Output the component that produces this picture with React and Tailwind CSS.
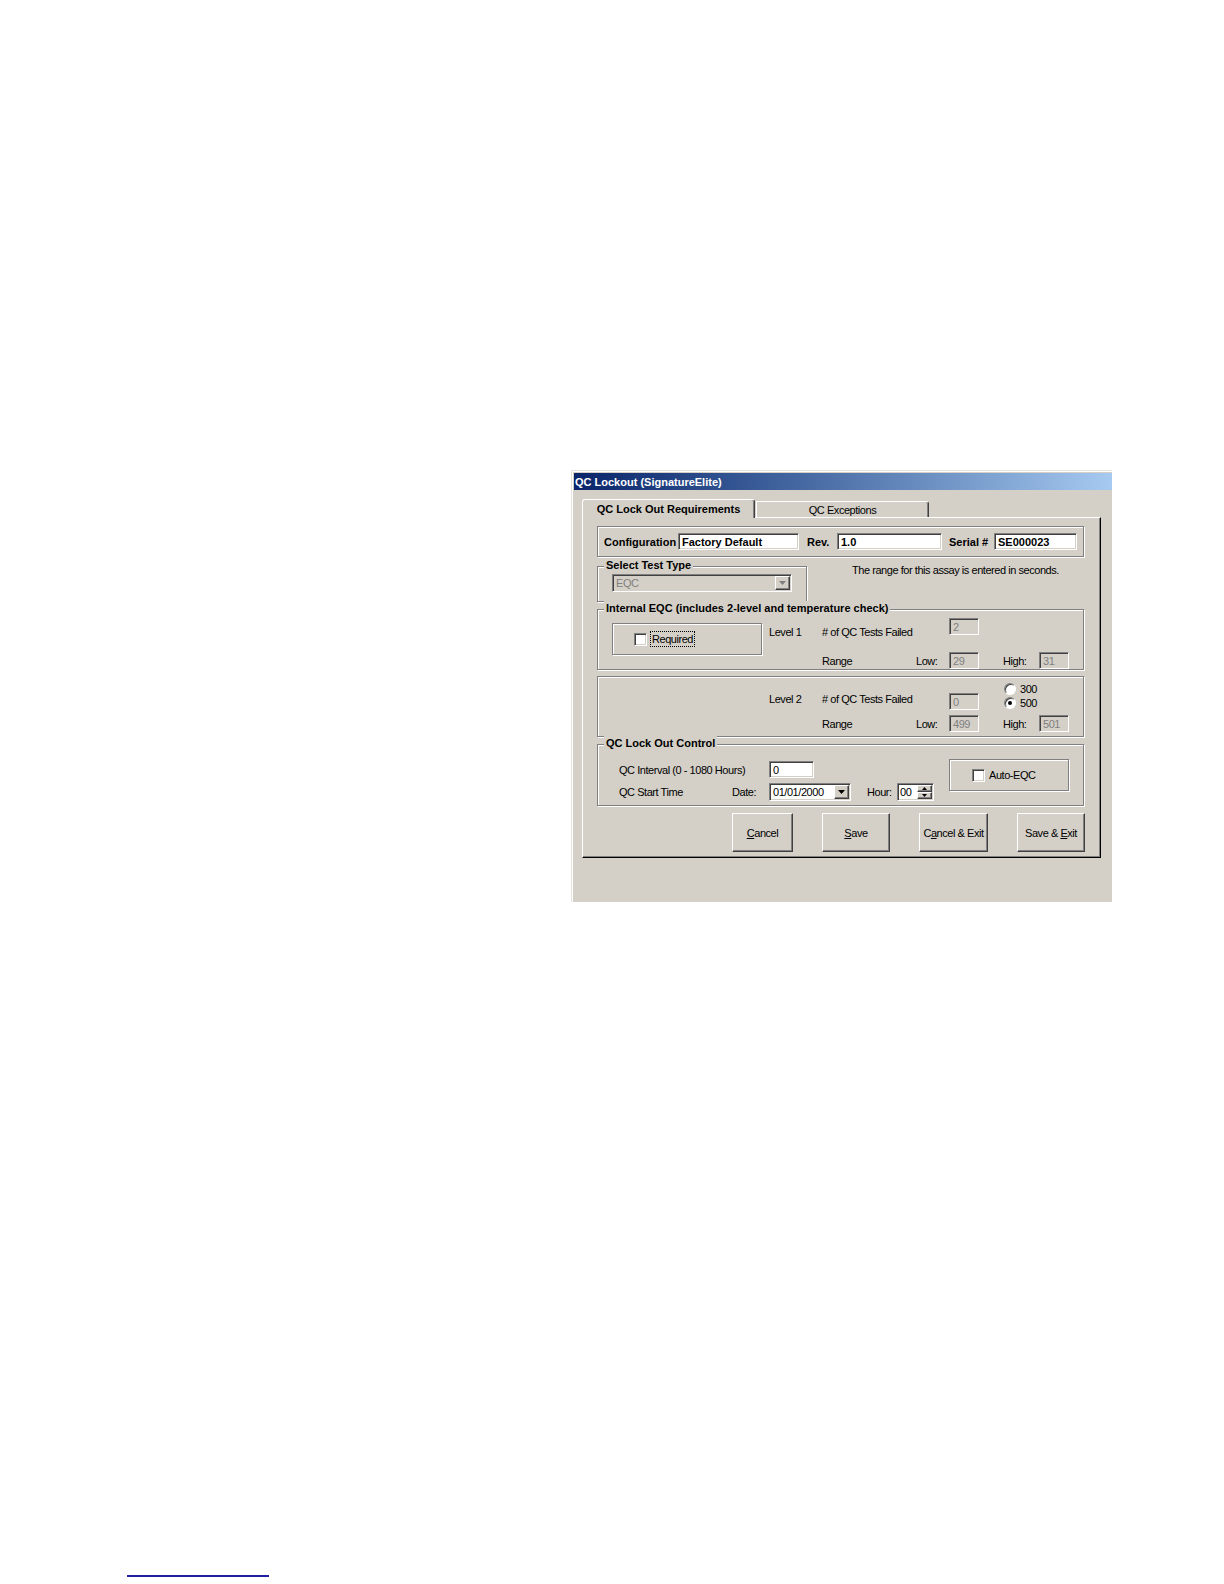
import React from "react";

const narrow =
  "font-['Liberation_Sans',Arial,sans-serif] text-[11px] leading-[14px] tracking-[-0.45px] whitespace-nowrap";
const bold =
  "font-['Liberation_Sans',Arial,sans-serif] text-[11px] leading-[14px] font-bold whitespace-nowrap";

const sunken =
  "border border-t-[#808080] border-l-[#808080] border-r-white border-b-white shadow-[inset_1px_1px_0_#404040,inset_-1px_-1px_0_#d4d0c8]";
const raised =
  "bg-[#d4d0c8] border border-t-white border-l-white border-r-[#404040] border-b-[#404040] shadow-[inset_-1px_-1px_0_#808080]";
const etched = "border border-[#808080] shadow-[inset_1px_1px_0_#fff,1px_1px_0_#fff]";

function Field({ className = "", value, disabled, strong }) {
  return (
    <div
      className={
        "h-[17px] flex items-center px-[3px] overflow-hidden " +
        sunken +
        " " +
        (disabled ? "bg-[#d4d0c8] text-[#808080] " : "bg-white text-black ") +
        (strong ? bold : narrow) +
        " " +
        className
      }
    >
      {value}
    </div>
  );
}

function Arrow({ color = "#000" }) {
  return (
    <svg width="7" height="4" viewBox="0 0 7 4">
      <path d="M0 0h7L3.5 4z" fill={color} />
    </svg>
  );
}

function Combo({ className = "", value, disabled }) {
  return (
    <div className={"h-[18px] flex " + sunken + " " + (disabled ? "bg-[#d4d0c8] " : "bg-white ") + className}>
      <div
        className={
          "flex-1 flex items-center pl-[3px] " + narrow + (disabled ? " text-[#808080]" : " text-black")
        }
      >
        {value}
      </div>
      <div className={"w-[15px] m-[1px] flex items-center justify-center " + raised}>
        <Arrow color={disabled ? "#808080" : "#000"} />
      </div>
    </div>
  );
}

function Group({ label, className = "", children }) {
  return (
    <div className={"relative " + etched + " " + className}>
      {label && (
        <span className={"absolute -top-[9px] left-[6px] bg-[#d4d0c8] px-[2px] " + bold}>{label}</span>
      )}
      {children}
    </div>
  );
}

function Check() {
  return <div className={"w-[13px] h-[13px] bg-white shrink-0 " + sunken} />;
}

function Radio({ checked, label }) {
  return (
    <div className="h-[14px] flex items-center">
      <div className="w-[12px] h-[12px] rounded-full bg-white border border-t-[#808080] border-l-[#808080] border-r-white border-b-white shadow-[inset_1px_1px_0_#404040] flex items-center justify-center">
        {checked && <div className="w-[4px] h-[4px] rounded-full bg-black" />}
      </div>
      <span className={"ml-[4px] " + narrow}>{label}</span>
    </div>
  );
}

function Btn({ className = "", children }) {
  return (
    <div className={"h-[39px] flex items-center justify-center " + raised + " " + narrow + " " + className}>
      {children}
    </div>
  );
}

function Dialog() {
  return (
    <div className="ml-[571px] w-[541px] h-[432px] bg-[#d4d0c8] p-[3px] shadow-[inset_1px_1px_0_#e4e2dc,inset_2px_2px_0_#fff]">
      <div className="h-[17px] mr-[-3px] bg-linear-to-r from-[#0a246a] to-[#a6caf0] flex items-center pl-[1px]">
        <span className={"text-white " + bold}>QC Lockout (SignatureElite)</span>
      </div>

      <div className="mt-[9px] ml-[8px] h-[18px] flex items-end">
        <div className="relative z-10 w-[173px] h-[19px] -mb-[1px] bg-[#d4d0c8] rounded-t-[3px] border-t border-l border-r border-t-white border-l-white border-r-[#404040] shadow-[inset_-1px_0_0_#808080] flex items-center justify-center">
          <span className={bold}>QC Lock Out Requirements</span>
        </div>
        <div className="ml-[1px] w-[173px] h-[16px] rounded-tr-[3px] border-t border-l border-r border-t-white border-l-white border-r-[#404040] shadow-[inset_-1px_0_0_#808080] flex items-center justify-center">
          <span className={narrow}>QC Exceptions</span>
        </div>
      </div>

      <div className="ml-[8px] w-[519px] h-[341px] border border-t-white border-l-white border-r-black border-b-black shadow-[inset_-1px_-1px_0_#808080] pl-[14px] pt-[8px]">
        {/* configuration */}
        <Group className="w-[487px] h-[31px] flex items-center pl-[6px]">
          <span className={"w-[74px] " + bold}>Configuration</span>
          <Field strong className="w-[121px]" value="Factory Default" />
          <span className={"w-[38px] pl-[8px] " + bold}>Rev.</span>
          <Field strong className="w-[105px]" value="1.0" />
          <span className={"w-[52px] pl-[7px] " + bold}>Serial #</span>
          <Field strong className="w-[83px]" value="SE000023" />
        </Group>

        {/* test type */}
        <div className="mt-[9px] flex items-start">
          <Group label="Select Test Type" className="w-[210px] h-[36px] pl-[14px] pt-[7px]">
            <Combo disabled className="w-[180px]" value="EQC" />
          </Group>
          <span className={"ml-[45px] -mt-[3px] " + narrow}>The range for this assay is entered in seconds.</span>
        </div>

        {/* internal EQC level 1 */}
        <Group
          label="Internal EQC (includes 2-level and temperature check)"
          className="mt-[7px] w-[487px] h-[61px] flex items-start"
        >
          <div className={"ml-[14px] mt-[13px] w-[150px] h-[32px] flex items-center pl-[21px] " + etched}>
            <Check />
            <span className={"ml-[3px] px-[1px] border border-dotted border-black " + narrow}>Required</span>
          </div>
          <div className="ml-[7px] mt-[8px]">
            <div className="flex items-start">
              <span className={"w-[53px] mt-[7px] " + narrow}>Level 1</span>
              <span className={"w-[127px] mt-[7px] " + narrow}># of QC Tests Failed</span>
              <Field disabled className="w-[30px]" value="2" />
            </div>
            <div className="mt-[13px] flex items-center">
              <span className="w-[53px]" />
              <span className={"w-[94px] " + narrow}>Range</span>
              <span className={"w-[33px] " + narrow}>Low:</span>
              <Field disabled className="w-[30px]" value="29" />
              <span className={"ml-[24px] w-[36px] " + narrow}>High:</span>
              <Field disabled className="w-[30px]" value="31" />
            </div>
          </div>
        </Group>

        {/* level 2 */}
        <Group className="mt-[6px] w-[487px] h-[61px]">
          <div className="ml-[171px] mt-[5px]">
            <div className="flex items-start">
              <span className={"w-[53px] mt-[10px] " + narrow}>Level 2</span>
              <span className={"w-[127px] mt-[10px] " + narrow}># of QC Tests Failed</span>
              <Field disabled className="w-[30px] mt-[11px]" value="0" />
              <div className="ml-[25px] flex flex-col">
                <Radio label="300" />
                <Radio checked label="500" />
              </div>
            </div>
            <div className="mt-[5px] flex items-center">
              <span className="w-[53px]" />
              <span className={"w-[94px] " + narrow}>Range</span>
              <span className={"w-[33px] " + narrow}>Low:</span>
              <Field disabled className="w-[30px]" value="499" />
              <span className={"ml-[24px] w-[36px] " + narrow}>High:</span>
              <Field disabled className="w-[30px]" value="501" />
            </div>
          </div>
        </Group>

        {/* lock out control */}
        <Group label="QC Lock Out Control" className="mt-[7px] w-[487px] h-[62px] flex items-start">
          <div className="ml-[21px] mt-[16px] w-[315px]">
            <div className="flex items-center">
              <span className={"w-[150px] " + narrow}>QC Interval (0 - 1080 Hours)</span>
              <Field className="w-[45px]" value="0" />
            </div>
            <div className="mt-[5px] flex items-center">
              <span className={"w-[113px] " + narrow}>QC Start Time</span>
              <span className={"w-[37px] " + narrow}>Date:</span>
              <Combo className="w-[82px]" value="01/01/2000" />
              <span className={"ml-[16px] w-[30px] " + narrow}>Hour:</span>
              <div className={"w-[37px] h-[18px] flex bg-white " + sunken}>
                <div className={"flex-1 flex items-center pl-[2px] " + narrow}>00</div>
                <div className="w-[15px] m-[1px] flex flex-col">
                  <div className={"flex-1 flex items-center justify-center " + raised}>
                    <svg width="5" height="3" viewBox="0 0 5 3">
                      <path d="M0 3h5L2.5 0z" fill="#000" />
                    </svg>
                  </div>
                  <div className={"flex-1 flex items-center justify-center " + raised}>
                    <svg width="5" height="3" viewBox="0 0 5 3">
                      <path d="M0 0h5L2.5 3z" fill="#000" />
                    </svg>
                  </div>
                </div>
              </div>
            </div>
          </div>
          <div className={"ml-[15px] mt-[14px] w-[120px] h-[32px] flex items-center pl-[22px] " + etched}>
            <Check />
            <span className={"ml-[4px] " + narrow}>Auto-EQC</span>
          </div>
        </Group>

        {/* buttons */}
        <div className="mt-[7px] ml-[135px] flex gap-[29px]">
          <Btn className="w-[61px]">
            <span className="underline">C</span>ancel
          </Btn>
          <Btn className="w-[68px]">
            <span className="underline">S</span>ave
          </Btn>
          <Btn className="w-[69px]">
            C<span className="underline">a</span>ncel &amp; Exit
          </Btn>
          <Btn className="w-[68px]">
            Save &amp;&nbsp;<span className="underline">E</span>xit
          </Btn>
        </div>
      </div>
    </div>
  );
}

export default function App() {
  return (
    <div className="w-[1224px] h-[1584px] bg-white pt-[470px] overflow-hidden">
      <Dialog />
      <div className="ml-[127px] mt-[673px] w-[142px] h-[2px] bg-[#1f1f9f]" />
    </div>
  );
}
